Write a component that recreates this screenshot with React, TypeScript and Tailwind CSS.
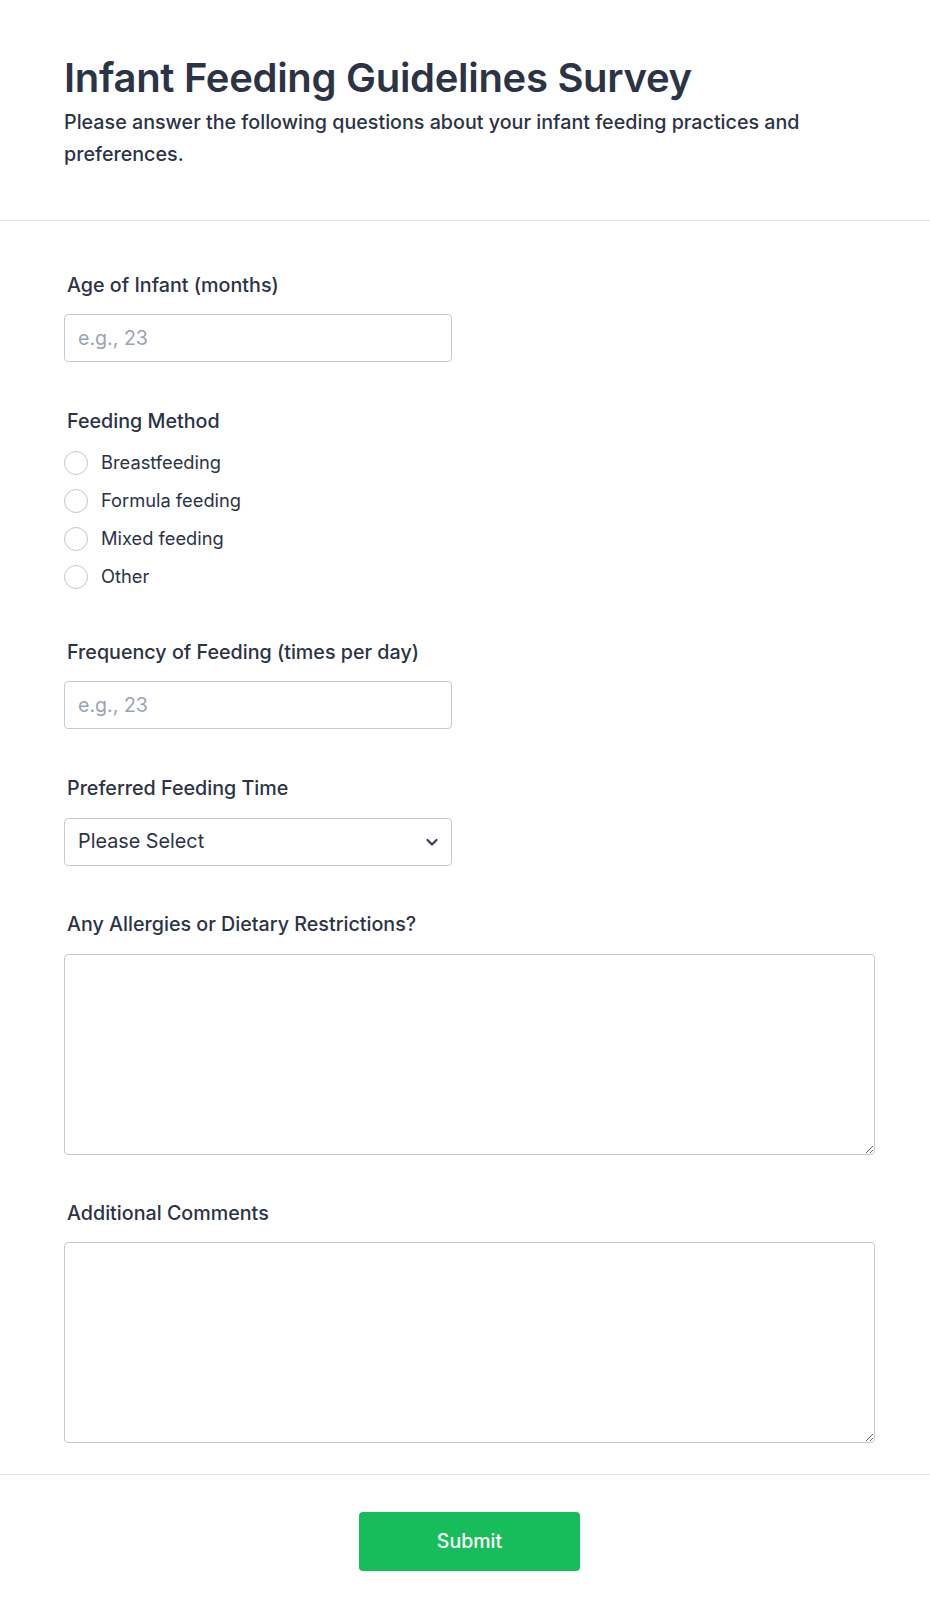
import React, { useState } from 'react';

const options = ['Breastfeeding', 'Formula feeding', 'Mixed feeding', 'Other'];

const Label: React.FC<{ children: React.ReactNode }> = ({ children }) => (
  <label className="block pl-[3px] text-[19.7px] leading-[28px] font-medium text-[#2c3345]">{children}</label>
);

export default function App() {
  const [method, setMethod] = useState('');

  return (
    <div className="min-h-[1620px] bg-white font-['Inter','Liberation_Sans',sans-serif] text-[#2c3345]">
      <header className="border-b border-[#e1e3ea] pl-16 pr-14 pt-[54px] pb-[50px]">
        <h1 className="text-[40px] leading-[48px] font-semibold tracking-[-0.3px]">Infant Feeding Guidelines Survey</h1>
        <p className="mt-1 text-[19.7px] leading-8 font-medium">
          Please answer the following questions about your infant feeding practices and preferences.
        </p>
      </header>

      <form className="flex flex-col gap-[45px] border-b border-[#e1e3ea] pl-16 pr-[55px] pt-[50px] pb-[31px]">
        <div>
          <Label>Age of Infant (months)</Label>
          <input
            type="text"
            placeholder="e.g., 23"
            className="mt-[15px] block h-12 w-[388px] rounded border border-[#c3cad8] px-[13px] text-[19.6px] text-[#2c3345] placeholder:text-[#9aa3b5] outline-none"
          />
        </div>

        <div className="-mb-[3px]">
          <Label>Feeding Method</Label>
          <div className="mt-[9px] flex flex-col">
            {options.map((o) => (
              <label key={o} className="flex h-[38px] cursor-pointer items-center gap-[13px]" onClick={() => setMethod(o)}>
                <span className="flex h-6 w-6 items-center justify-center rounded-full border-[1.5px] border-[#bfc5d2] bg-white">
                  {method === o && <span className="h-3 w-3 rounded-full bg-[#2e69ff]" />}
                </span>
                <span className="text-[18.3px] text-[#2c3345]">{o}</span>
              </label>
            ))}
          </div>
        </div>

        <div>
          <Label>Frequency of Feeding (times per day)</Label>
          <input
            type="text"
            placeholder="e.g., 23"
            className="mt-[15px] block h-12 w-[388px] rounded border border-[#c3cad8] px-[13px] text-[19.6px] text-[#2c3345] placeholder:text-[#9aa3b5] outline-none"
          />
        </div>

        <div>
          <Label>Preferred Feeding Time</Label>
          <div className="relative mt-[16px] w-[388px]">
            <select className="block h-12 w-full appearance-none rounded border border-[#c3cad8] bg-white pl-[13px] pr-10 text-[19.8px] text-[#2c3345] outline-none">
              <option>Please Select</option>
              <option>Morning</option>
              <option>Afternoon</option>
              <option>Evening</option>
              <option>Night</option>
            </select>
            <svg className="pointer-events-none absolute right-[13px] top-1/2 h-[14px] w-[14px] -translate-y-1/2" viewBox="0 0 14 14" fill="none">
              <path d="M2.5 5l4.5 4.5L11.5 5" stroke="#34405a" strokeWidth="2.2" strokeLinecap="round" strokeLinejoin="round" />
            </svg>
          </div>
        </div>

        <div className="-mt-[1px]">
          <Label>Any Allergies or Dietary Restrictions?</Label>
          <textarea className="mt-[16px] block h-[201px] w-full rounded border border-[#c3cad8] p-3 text-[18px] outline-none" />
        </div>

        <div className="-mt-[1px]">
          <Label>Additional Comments</Label>
          <textarea className="mt-[15px] block h-[201px] w-full rounded border border-[#c3cad8] p-3 text-[18px] outline-none" />
        </div>
      </form>

      <div className="flex justify-center pl-16 pr-[55px] pt-[37px] pb-[50px]">
        <button type="button" className="h-[59px] w-[221px] rounded bg-[#18bd5b] text-[19.5px] font-medium text-white">
          Submit
        </button>
      </div>
    </div>
  );
}
